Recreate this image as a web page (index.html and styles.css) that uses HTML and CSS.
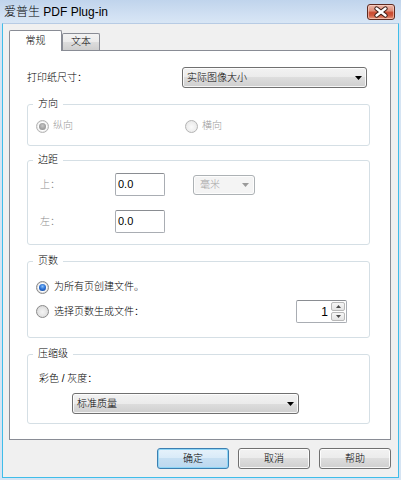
FILE: index.html
```html
<!DOCTYPE html>
<html lang="zh-CN">
<head>
<meta charset="utf-8">
<title>爱普生 PDF Plug-in</title>
<link rel="stylesheet" href="styles.css">
</head>
<body>
<div class="window">
  <div class="titlebar">
    <span class="title">爱普生 PDF Plug-in</span>
    <span class="close">
      <svg width="26" height="14" viewBox="0 0 26 14">
        <path d="M8.5 3.5 L17.5 10.5 M17.5 3.5 L8.5 10.5" stroke="#3a1c16" stroke-width="4.4" stroke-linecap="round" fill="none"/>
        <path d="M8.5 3.5 L17.5 10.5 M17.5 3.5 L8.5 10.5" stroke="#ffffff" stroke-width="2.4" stroke-linecap="round" fill="none"/>
      </svg>
    </span>
  </div>
  <div class="client">
    <div class="tabs">
      <div class="tab active">常规</div>
      <div class="tab">文本</div>
    </div>
    <div class="panel">
      <div class="paper-row">
        <span class="label">打印纸尺寸：</span>
        <div class="combo paper-combo"><span>实际图像大小</span><svg class="arrow" width="7" height="4" viewBox="0 0 7 4"><path d="M0 0h7L3.5 4z"/></svg></div>
      </div>

      <fieldset class="group g-orient">
        <legend>方向</legend>
        <div class="orient-row">
          <span class="radio disabled checked orient-item"><span class="dot"></span>纵向</span>
          <span class="radio disabled"><span class="dot"></span>横向</span>
        </div>
      </fieldset>

      <fieldset class="group g-margin">
        <legend>边距</legend>
        <div class="margin-grid">
          <span class="mlabel">上：</span>
          <span class="textbox">0.0</span>
          <div class="combo unit-combo disabled"><span>毫米</span><svg class="arrow" width="7" height="4" viewBox="0 0 7 4"><path d="M0 0h7L3.5 4z"/></svg></div>
          <span class="mlabel">左：</span>
          <span class="textbox">0.0</span>
          <span></span>
        </div>
      </fieldset>

      <fieldset class="group g-pages">
        <legend>页数</legend>
        <div class="pages-row1">
          <span class="radio checked"><span class="dot"></span>为所有页创建文件。</span>
        </div>
        <div class="pages-row2">
          <span class="radio"><span class="dot"></span>选择页数生成文件：</span>
          <div class="spin">
            <span class="spin-value">1</span>
            <span class="spin-btns">
              <span class="spin-btn"><svg width="5" height="3" viewBox="0 0 5 3"><path d="M0 3h5L2.5 0z"/></svg></span>
              <span class="spin-btn"><svg width="5" height="3" viewBox="0 0 5 3"><path d="M0 0h5L2.5 3z"/></svg></span>
            </span>
          </div>
        </div>
      </fieldset>

      <fieldset class="group g-compress">
        <legend>压缩级</legend>
        <div class="compress-label">彩色 / 灰度：</div>
        <div class="combo quality-combo"><span>标准质量</span><svg class="arrow" width="7" height="4" viewBox="0 0 7 4"><path d="M0 0h7L3.5 4z"/></svg></div>
      </fieldset>
    </div>
    <div class="buttons">
      <span class="btn default">确定</span>
      <span class="btn">取消</span>
      <span class="btn">帮助</span>
    </div>
  </div>
</div>
</body>
</html>
```

FILE: styles.css
```css
html, body {
  margin: 0;
  padding: 0;
}
body {
  font-family: "Liberation Sans", "Noto Sans CJK SC", sans-serif;
  font-size: 10px;
  font-weight: 300;
  color: #000;
  background: #dbe7f4;
}
.window {
  width: 401px;
  height: 480px;
  box-sizing: border-box;
  background: #d6e4f3;
  display: flex;
  flex-direction: column;
}
.titlebar {
  height: 23px;
  flex: none;
  box-sizing: border-box;
  display: flex;
  align-items: center;
  padding: 0 6px 0 4px;
  background: linear-gradient(#c0d4ec, #d2e1f3 70%, #d8e6f5);
}
.title {
  font-size: 12px;
  line-height: 14px;
  color: #000;
}
.close {
  margin-left: auto;
  width: 28px;
  height: 16px;
  box-sizing: border-box;
  border: 1px solid #5e2a20;
  border-radius: 3px;
  background: linear-gradient(#ecb8aa 0%, #df8f7b 40%, #c9492f 55%, #cf5a40 75%, #e89a80 100%);
  box-shadow: inset 0 0 0 1px rgba(255,220,210,0.55);
  display: flex;
  align-items: center;
  justify-content: center;
}
.close svg {
  display: block;
}
.client {
  flex: 1;
  margin: 0 2px 2px 2px;
  border: 1px solid #3fbde9;
  border-top-color: #b7cbe4;
  background: #f0f0f0;
  padding: 6px 7px 8px 6px;
  display: flex;
  flex-direction: column;
}
.tabs {
  height: 20px;
  flex: none;
  display: flex;
  align-items: flex-end;
  position: relative;
  z-index: 1;
}
.tab {
  box-sizing: border-box;
  border: 1px solid #898c95;
  border-bottom: none;
  display: flex;
  align-items: center;
  justify-content: center;
  line-height: 12px;
}
.tab.active {
  width: 53px;
  height: 21px;
  margin-bottom: -1px;
  background: #fff;
  border-radius: 2px 2px 0 0;
}
.tab:not(.active) {
  width: 38px;
  height: 17px;
  background: linear-gradient(#f3f3f3, #ebebeb 50%, #dddddd 50%, #cfcfcf);
  border-radius: 2px 2px 0 0;
}
.panel {
  height: 390px;
  flex: none;
  box-sizing: border-box;
  border: 1px solid #898c95;
  background: #fff;
  padding: 16px 20px 0 17px;
}
.paper-row {
  display: grid;
  grid-template-columns: 155px 185px;
  align-items: center;
  height: 21px;
}
.label, .mlabel, .compress-label, .radio {
  line-height: 14px;
}
.combo {
  box-sizing: border-box;
  border: 1px solid #707070;
  border-radius: 3px;
  background: linear-gradient(#f2f2f2, #ebebeb 50%, #dddddd 50%, #cfcfcf);
  box-shadow: inset 0 0 0 1px rgba(255,255,255,0.8);
  display: flex;
  align-items: center;
  padding: 0 4px 0 4px;
  line-height: 12px;
}
.combo span {
  flex: 1;
}
.combo .arrow {
  display: block;
  fill: #000;
}
.paper-combo {
  height: 21px;
}
.group {
  margin: 0;
  padding: 0;
  border: 1px solid #d5dfe5;
  border-radius: 3px;
  min-width: 0;
}
.group legend {
  padding: 0 5px 0 5px;
  line-height: 14px;
  height: 14px;
  color: #000;
}
.g-orient {
  margin-top: 9px;
  padding: 8px 0 12px 8px;
}
.g-orient legend, .g-pages legend {
  margin-left: -3px;
}
.orient-row {
  display: flex;
  height: 14px;
  align-items: center;
}
.orient-item {
  width: 149px;
}
.radio {
  display: inline-flex;
  align-items: center;
}
.radio .dot {
  width: 13px;
  height: 13px;
  box-sizing: border-box;
  border-radius: 50%;
  border: 1px solid #8a8a8a;
  background: radial-gradient(circle at 50% 55%, #f4f4f4 0, #e6e6e6 45%, #cfcfcf 100%);
  margin-right: 5px;
  flex: none;
  display: flex;
  align-items: center;
  justify-content: center;
}
.radio.checked .dot::after {
  content: "";
  width: 7px;
  height: 7px;
  border-radius: 50%;
  background: radial-gradient(circle at 50% 35%, #8cc2f7 0, #2d74d8 45%, #0f3f96 100%);
  box-shadow: 0 0 0 1px #fff;
}
.radio.disabled {
  color: #9a9a9a;
}
.g-orient .radio .dot {
  margin-right: 4px;
}
.radio.disabled .dot {
  border-color: #b4b4b4;
  background: radial-gradient(circle at 50% 55%, #fafafa 0, #efefef 50%, #e0e0e0 100%);
}
.radio.disabled.checked .dot::after {
  background: radial-gradient(circle at 50% 40%, #c8c8c8 0, #a4a4a4 50%, #8a8a8a 100%);
}
.g-margin {
  margin-top: 7px;
  padding: 6px 0 11px 12px;
}
.g-margin legend {
  margin-left: -7px;
}
.margin-grid {
  display: grid;
  grid-template-columns: 75px 50px 28px 62px;
  grid-template-rows: 23px 23px;
  row-gap: 14px;
  align-items: center;
}
.mlabel {
  color: #8c8c8c;
}
.textbox {
  box-sizing: border-box;
  height: 23px;
  border: 1px solid #a9adb3;
  border-top-color: #8a8d92;
  border-radius: 2px;
  background: #fff;
  padding: 3px 0 0 2px;
  line-height: 14px;
  font-size: 11px;
}
.unit-combo {
  grid-column: 4;
  height: 20px;
}
.margin-grid .textbox {
  grid-column: 2;
}
.margin-grid .mlabel {
  grid-column: 1;
}
.combo.disabled {
  border-color: #adb2b5;
  background: #f4f4f4;
  color: #a0a0a0;
  padding-left: 6px;
  padding-right: 5px;
}
.combo.disabled .arrow {
  fill: #9a9a9a;
}
.g-pages {
  margin-top: 9px;
  padding: 12px 22px 14px 8px;
}
.pages-row1 {
  height: 14px;
  display: flex;
  align-items: center;
}
.pages-row2 {
  margin-top: 6px;
  height: 23px;
  display: flex;
  align-items: center;
}
.spin {
  margin-left: auto;
  width: 51px;
  height: 23px;
  box-sizing: border-box;
  border: 1px solid #a9adb3;
  border-top-color: #8a8d92;
  border-radius: 2px;
  background: #fff;
  display: flex;
  align-items: center;
  padding: 1px 1px 1px 0;
}
.spin-value {
  flex: 1;
  text-align: right;
  font-size: 12px;
  line-height: 14px;
  padding-right: 3px;
}
.spin-btns {
  display: flex;
  flex-direction: column;
  gap: 1px;
  width: 14px;
  height: 19px;
}
.spin-btn {
  flex: 1;
  box-sizing: border-box;
  border: 1px solid #b8b8b8;
  border-radius: 2px;
  background: linear-gradient(#f6f6f6, #e4e4e4);
  display: flex;
  align-items: center;
  justify-content: center;
}
.spin-btn svg {
  display: block;
  fill: #4a4a4a;
}
.g-compress {
  margin-top: 9px;
  padding: 11px 0 9px 11px;
}
.g-compress legend {
  margin-left: -6px;
}
.compress-label {
  height: 14px;
}
.quality-combo {
  margin-top: 7px;
  margin-left: 33px;
  width: 227px;
  height: 21px;
}
.buttons {
  margin-top: 8px;
  height: 21px;
  display: flex;
  justify-content: flex-end;
  gap: 9px;
  padding-right: 0;
}
.btn {
  width: 72px;
  height: 21px;
  box-sizing: border-box;
  border: 1px solid #707070;
  border-radius: 3px;
  background: linear-gradient(#f2f2f2, #ebebeb 50%, #dddddd 50%, #cfcfcf);
  box-shadow: inset 0 0 0 1px rgba(255,255,255,0.85);
  display: flex;
  align-items: center;
  justify-content: center;
  line-height: 12px;
}
.btn.default {
  border-color: #3c7fb1;
  background: linear-gradient(#e6f2fb, #d8eaf8 50%, #c6dff2 50%, #bcd8ef);
  box-shadow: inset 0 0 0 1px #8fd6f6;
}
```
